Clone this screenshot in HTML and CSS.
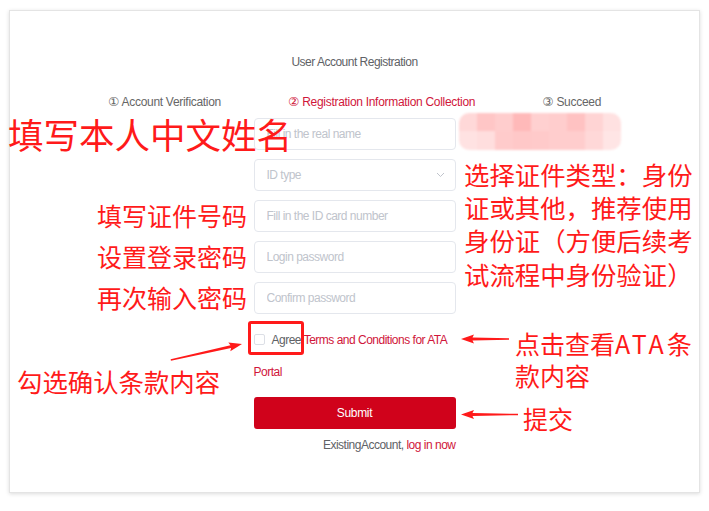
FILE: index.html
```html
<!DOCTYPE html>
<html lang="en">
<head>
<meta charset="utf-8">
<title>User Account Registration</title>
<link rel="stylesheet" href="styles.css">
</head>
<body>
<div class="page">
  <div class="card">
    <h1 class="title">User Account Registration</h1>
    <ol class="steps">
      <li class="step"><span class="num">①</span> Account Verification</li>
      <li class="step active"><span class="num">②</span> Registration Information Collection</li>
      <li class="step"><span class="num">③</span> Succeed</li>
    </ol>
    <form class="form">
      <div class="fields">
        <input class="field" type="text" placeholder="Fill in the real name">
        <div class="field select">
          <span class="select-text">ID type</span>
          <svg class="chevron" width="9" height="6" viewBox="0 0 9 6"><path d="M1 1 L4.5 4.5 L8 1" fill="none" stroke="#c0c4cc" stroke-width="1"/></svg>
        </div>
        <input class="field" type="text" placeholder="Fill in the ID card number">
        <input class="field" type="password" placeholder="Login password">
        <input class="field" type="password" placeholder="Confirm password">
      </div>
      <div class="agree"><span class="checkbox"></span><span class="agree-label">Agree</span> <a class="link" href="#">Terms and Conditions for ATA<br>Portal</a></div>
      <button class="submit" type="button">Submit</button>
      <div class="existing">ExistingAccount, <a class="link" href="#">log in now</a></div>
    </form>
  </div>

  <div class="mosaic">
    <span class="m c1"></span><span class="m c2"></span><span class="m c3"></span><span class="m c4"></span><span class="m c5"></span><span class="m c6"></span><span class="m c7"></span><span class="m c8"></span><span class="m c9"></span>
    <span class="m d1"></span><span class="m d2"></span><span class="m d3"></span><span class="m d4"></span><span class="m d5"></span><span class="m d6"></span><span class="m d7"></span><span class="m d8"></span><span class="m d9"></span>
  </div>

  <div class="note note-name">填写本人中文姓名</div>
  <div class="note note-left note-id">填写证件号码</div>
  <div class="note note-left note-pwd">设置登录密码</div>
  <div class="note note-left note-confirm">再次输入密码</div>
  <div class="note note-type">选择证件类型：身份<br>证或其他，推荐使用<br>身份证（方便后续考<br>试流程中身份验证）</div>
  <div class="note note-terms"><span class="line">点击查看<span class="latin">ATA</span>条</span><span class="line">款内容</span></div>
  <div class="note note-check">勾选确认条款内容</div>
  <div class="note note-submit">提交</div>

  <div class="highlight"></div>

  <svg class="arrows" width="709" height="511" viewBox="0 0 709 511">
    <g fill="#ff1a1a">
      <polygon transform="translate(461,339)" points="0,0 13,-4.5 11.5,-1.4 48,-0.7 48,0.7 11.5,1.4 13,4.5"/>
      <polygon transform="translate(461,414.5)" points="0,0 13,-4.5 11.5,-1.4 57,-0.7 57,0.7 11.5,1.4 13,4.5"/>
      <polygon transform="translate(242,344) rotate(-12.7)" points="0,0 -13,-4.5 -11.5,-1.4 -73,-0.7 -73,0.7 -11.5,1.4 -13,4.5"/>
    </g>
  </svg>
</div>
</body>
</html>
```

FILE: styles.css
```css
* { box-sizing: border-box; }

html, body {
  margin: 0;
  padding: 0;
  background: #ffffff;
}

.page {
  position: relative;
  width: 709px;
  height: 511px;
  overflow: hidden;
  font-family: "Liberation Sans", Arial, sans-serif;
  font-size: 12px;
  letter-spacing: -0.5px;
  color: #606266;
}

.card {
  margin: 10px 9px 0;
  height: 483px;
  border: 1px solid #e4e4e4;
  box-shadow: 0 1px 4px rgba(0, 0, 0, 0.14);
  background: #fff;
  display: flex;
  flex-direction: column;
  align-items: center;
}

.title {
  margin: 43px 0 0;
  font-size: 12px;
  font-weight: normal;
  line-height: 16px;
  color: #606266;
}

.steps {
  list-style: none;
  margin: 24px 0 0;
  padding: 0;
  display: flex;
  gap: 67px;
  line-height: 16px;
  letter-spacing: -0.3px;
}

.step {
  color: #666;
  white-space: nowrap;
}

.step .num {
  font-family: "DejaVu Sans", sans-serif;
  font-size: 12.5px;
  letter-spacing: 0;
}

.step.active {
  color: #d0163a;
}

.form {
  width: 202px;
  margin-top: 8px;
  display: flex;
  flex-direction: column;
}

.fields {
  display: flex;
  flex-direction: column;
  gap: 9px;
}

.field {
  width: 202px;
  height: 32px;
  margin: 0;
  padding: 0 12px;
  border: 1px solid #e4e7ed;
  border-radius: 4px;
  background: #fff;
  font-family: inherit;
  font-size: 12px;
  letter-spacing: -0.5px;
  color: #606266;
  outline: none;
}

.field::placeholder {
  color: #c0c4cc;
}

.select {
  display: flex;
  align-items: center;
  justify-content: space-between;
}

.select-text {
  color: #c0c4cc;
}

.chevron {
  display: block;
  margin-right: -2px;
}

.agree {
  margin-top: 10px;
  line-height: 32px;
  color: #606266;
}

.checkbox {
  display: inline-block;
  width: 11px;
  height: 11px;
  margin-right: 7px;
  border: 1px solid #dcdfe6;
  border-radius: 2px;
  vertical-align: -1px;
  background: #fff;
}

.link {
  color: #d0163a;
  text-decoration: none;
}

.submit {
  margin-top: 9px;
  height: 32px;
  width: 202px;
  border: none;
  border-radius: 3px;
  background: #d0021b;
  color: #fff;
  font-family: inherit;
  font-size: 12px;
  letter-spacing: -0.3px;
  cursor: pointer;
}

.existing {
  margin-top: 8px;
  line-height: 16px;
  text-align: right;
  color: #606266;
}

/* mosaic (privacy blur) */
.mosaic {
  position: absolute;
  left: 459px;
  top: 113px;
  width: 162px;
  height: 37px;
  border-radius: 10px;
  overflow: hidden;
  display: grid;
  grid-template-columns: repeat(9, 18px);
  grid-template-rows: 18px 19px;
  filter: blur(0.8px);
}

.m { display: block; }
.c1 { background: #ffd8d8; }
.c2 { background: #ffc6c6; }
.c3 { background: #ffcdcd; }
.c4 { background: #ffb9b9; }
.c5 { background: #ffd0d0; }
.c6 { background: #ffcdcd; }
.c7 { background: #ffc2c2; }
.c8 { background: #ffd4d4; }
.c9 { background: #ffe1e1; }
.d1 { background: #ffe2e2; }
.d2 { background: #ffdede; }
.d3 { background: #ffcbcb; }
.d4 { background: #ffc8c8; }
.d5 { background: #ffcaca; }
.d6 { background: #ffcdcd; }
.d7 { background: #ffcdcd; }
.d8 { background: #ffd8d8; }
.d9 { background: #ffe5e5; }

/* annotations */
.note {
  position: absolute;
  font-family: "Noto Sans CJK SC", "Noto Sans CJK JP", sans-serif;
  font-size: 25px;
  line-height: 25px;
  letter-spacing: 0;
  color: #ff1a1a;
  white-space: nowrap;
}

.note-name {
  left: 8px;
  top: 116px;
  font-size: 35.5px;
  line-height: 35px;
}

.note-left {
  right: 462px;
  text-align: right;
}

.note-id { top: 203px; }
.note-pwd { top: 244px; }
.note-confirm { top: 285px; }

.note-type {
  left: 464px;
  top: 158px;
  font-size: 25.4px;
  line-height: 33.2px;
}

.note-terms {
  left: 515px;
  top: 331px;
  display: flex;
  flex-direction: column;
  gap: 7px;
}

.note-terms .line {
  display: block;
}

.note-terms .latin {
  letter-spacing: 3px;
}

.note-check {
  left: 17px;
  top: 369px;
  font-size: 25.4px;
}

.note-submit {
  left: 523px;
  top: 406px;
}

.highlight {
  position: absolute;
  left: 248px;
  top: 321px;
  width: 56px;
  height: 34px;
  border: 3px solid #ff1a1a;
  border-radius: 3px;
}

.arrows {
  position: absolute;
  left: 0;
  top: 0;
  pointer-events: none;
}
```
